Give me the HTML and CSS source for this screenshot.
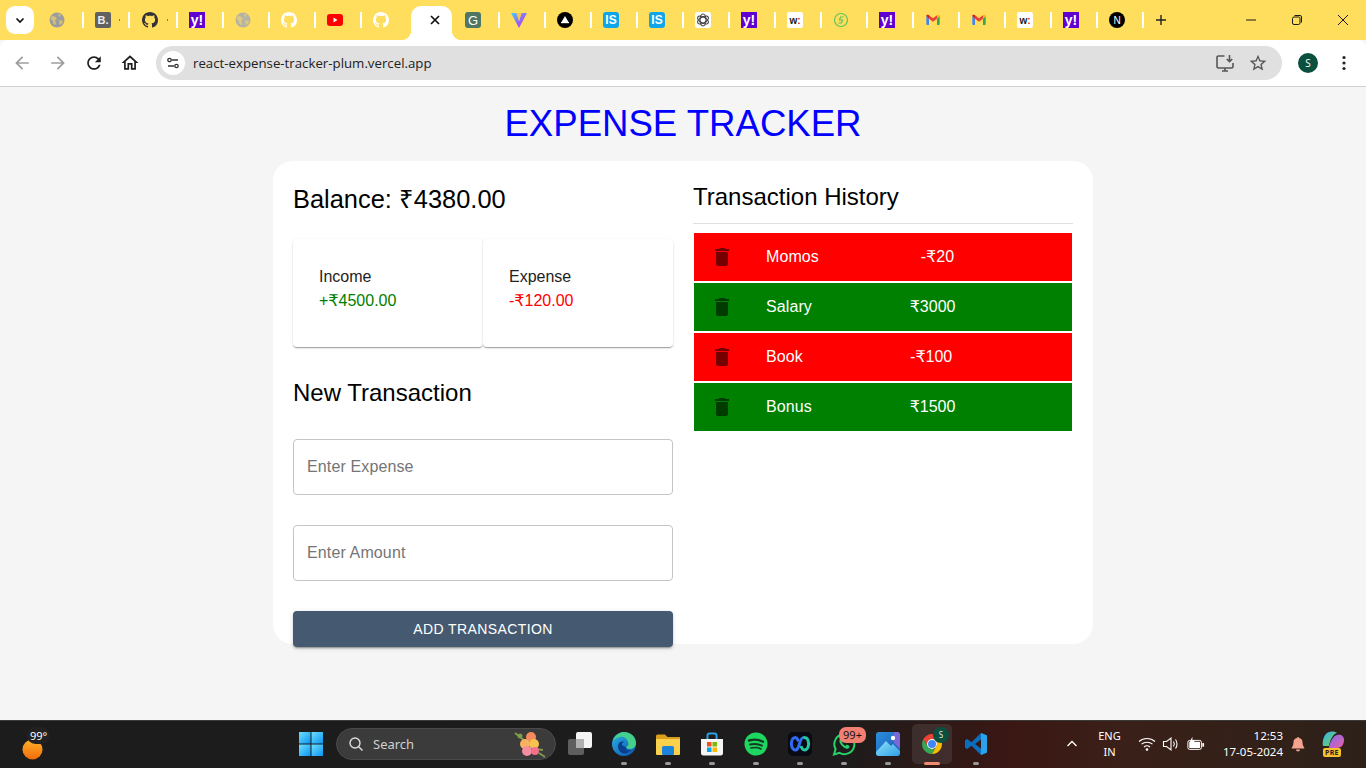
FILE: index.html
```html
<!DOCTYPE html>
<html lang="en">
<head>
<meta charset="utf-8">
<title>Expense Tracker</title>
<link rel="stylesheet" href="styles.css">
</head>
<body>
<svg class="defs" aria-hidden="true">
  <defs>
    <linearGradient id="gVite" x1="0" y1="0" x2="1" y2="1"><stop offset="0" stop-color="#41d1ff"/><stop offset=".6" stop-color="#9a5cf5"/><stop offset="1" stop-color="#bd34fe"/></linearGradient>
    <linearGradient id="gWin" x1="0" y1="0" x2="1" y2="1"><stop offset="0" stop-color="#6fe0fb"/><stop offset="1" stop-color="#0a94f5"/></linearGradient>
    <linearGradient id="gEdge" x1="0" y1="0" x2="1" y2="1"><stop offset="0" stop-color="#2bb5e8"/><stop offset="1" stop-color="#0b4fa8"/></linearGradient>
    <linearGradient id="gSun" x1="0" y1="0" x2="0" y2="1"><stop offset="0" stop-color="#fdb32b"/><stop offset="1" stop-color="#f26a0a"/></linearGradient>
    <linearGradient id="gPhoto" x1="0" y1="0" x2="1" y2="1"><stop offset="0" stop-color="#2a8fe0"/><stop offset="1" stop-color="#1c58b0"/></linearGradient>
    <linearGradient id="gPeak" x1="0" y1="0" x2="1" y2="1"><stop offset="0" stop-color="#8fe3f7"/><stop offset="1" stop-color="#2f9fe8"/></linearGradient>
    <linearGradient id="gCo1" x1="0" y1="0" x2="1" y2="1"><stop offset="0" stop-color="#2fb6ef"/><stop offset="1" stop-color="#7bd04f"/></linearGradient>
    <linearGradient id="gCo2" x1="0" y1="0" x2="1" y2="1"><stop offset="0" stop-color="#7a6cf0"/><stop offset="1" stop-color="#ef5fa7"/></linearGradient>
    <symbol id="github" viewBox="0 0 16 16"><path fill-rule="evenodd" d="M8 0C3.58 0 0 3.58 0 8c0 3.54 2.29 6.53 5.47 7.59.4.07.55-.17.55-.38 0-.19-.01-.82-.01-1.49-2.01.37-2.53-.49-2.69-.94-.09-.23-.48-.94-.82-1.13-.28-.15-.68-.52-.01-.53.63-.01 1.08.58 1.23.82.72 1.21 1.87.87 2.33.66.07-.52.28-.87.51-1.07-1.78-.2-3.64-.89-3.64-3.95 0-.87.31-1.59.82-2.15-.08-.2-.36-1.02.08-2.12 0 0 .67-.21 2.2.82.64-.18 1.32-.27 2-.27.68 0 1.36.09 2 .27 1.53-1.04 2.2-.82 2.2-.82.44 1.1.16 1.92.08 2.12.51.56.82 1.27.82 2.15 0 3.07-1.87 3.75-3.65 3.95.29.25.54.73.54 1.48 0 1.07-.01 1.93-.01 2.2 0 .21.15.46.55.38A8.013 8.013 0 0016 8c0-4.42-3.58-8-8-8z"/></symbol>
    <symbol id="globe" viewBox="0 0 16 16"><circle cx="8" cy="8" r="7.5"/><path class="globe-land" d="M3 3.5 6.5 5 8 7 6 8.5 7 11 6 13.5 4 11 3.5 8.5 1.5 7zM9.5 1.5 12 3 10.5 5 9.5 4zM10 8.5h3.5l.5 1.5-2.5 3L10.500 12z"/></symbol>
    <symbol id="gmail" viewBox="0 0 24 24">
      <path fill="#4285f4" d="M2 6v12a1.500 1.500 0 0 0 1.500 1.500H6V10z"/>
      <path fill="#34a853" d="M18 10v9.500h2.500A1.500 1.500 0 0 0 22 18V6z"/>
      <path fill="#ea4335" d="M6 10V5l6 4.500L18 5v5l-6 4.500z"/>
      <path fill="#fbbc04" d="M18 5l1-.7A2 2 0 0 1 22 6l-4 4z"/>
      <path fill="#c5221f" d="M2 6a2 2 0 0 1 3-1.700L6 5v5z"/>
    </symbol>
    <symbol id="trash" viewBox="0 0 24 24"><path d="M6 19c0 1.100.9 2 2 2h8c1.100 0 2-.9 2-2V7H6v12zM19 4h-3.500l-1-1h-5l-1 1H5v2h14V4z"/></symbol>
  </defs>
</svg>

<div class="tabstrip">
  <button class="tab-search" aria-label="Search tabs"><svg class="ico12" viewBox="0 0 12 12"><path class="stroke-dark" d="M2.500 4.500 6 8l3.500-3.500"/></svg></button>
  <div class="tab"><svg class="fav fav-globe"><use href="#globe"/></svg><i class="sep"></i></div>
  <div class="tab"><span class="fav fav-b">B.</span><i class="dot"></i><i class="sep"></i></div>
  <div class="tab tab-wide"><svg class="fav fav-gh-dark"><use href="#github"/></svg><i class="dot"></i><i class="sep"></i></div>
  <div class="tab"><span class="fav fav-y">y!</span><i class="sep"></i></div>
  <div class="tab"><svg class="fav fav-globe fav-globe-light"><use href="#globe"/></svg><i class="sep"></i></div>
  <div class="tab"><svg class="fav fav-gh-white"><use href="#github"/></svg><i class="sep"></i></div>
  <div class="tab"><svg class="fav" viewBox="0 0 16 16"><rect y="2" width="16" height="12" rx="3" fill="#f00"/><path d="M6.500 5.500 10.500 8l-4 2.500z" fill="#fff"/></svg><i class="sep"></i></div>
  <div class="tab"><svg class="fav fav-gh-white"><use href="#github"/></svg></div>
  <div class="tab tab-active"><svg class="ico12" viewBox="0 0 12 12"><path class="stroke-dark" d="M2 2l8 8M10 2l-8 8"/></svg></div>
  <div class="tab"><span class="fav fav-g">G</span><i class="sep"></i></div>
  <div class="tab"><svg class="fav" viewBox="0 0 16 16"><path d="M0 1h5.500L8 9l2.500-8H16L8 16z" fill="url(#gVite)"/><path d="M5.500 1h5L8 9z" fill="#ffc24a"/></svg><i class="sep"></i></div>
  <div class="tab"><svg class="fav" viewBox="0 0 16 16"><circle cx="8" cy="8" r="8" fill="#000"/><path d="M8 4l3.500 6h-7z" fill="#fff"/><rect x="4" y="10" width="8" height="1.200" fill="#fff"/></svg><i class="sep"></i></div>
  <div class="tab"><span class="fav fav-is">IS</span><i class="sep"></i></div>
  <div class="tab"><span class="fav fav-is">IS</span><i class="sep"></i></div>
  <div class="tab"><svg class="fav" viewBox="0 0 16 16"><rect width="16" height="16" rx="2" fill="#fff"/><g class="gpt"><ellipse cx="8" cy="8" rx="3" ry="6"/><ellipse cx="8" cy="8" rx="3" ry="6" transform="rotate(60 8 8)"/><ellipse cx="8" cy="8" rx="3" ry="6" transform="rotate(120 8 8)"/></g></svg><i class="sep"></i></div>
  <div class="tab"><span class="fav fav-y">y!</span><i class="sep"></i></div>
  <div class="tab"><span class="fav fav-w">w<b>:</b></span><i class="sep"></i></div>
  <div class="tab"><svg class="fav" viewBox="0 0 16 16"><circle class="ring" cx="8" cy="8" r="6.500"/><path class="ring" d="M10.500 5H7.500L6.500 8h3L8.500 11H5.500"/></svg><i class="sep"></i></div>
  <div class="tab"><span class="fav fav-y">y!</span><i class="sep"></i></div>
  <div class="tab"><svg class="fav"><use href="#gmail"/></svg><i class="sep"></i></div>
  <div class="tab"><svg class="fav"><use href="#gmail"/></svg><i class="sep"></i></div>
  <div class="tab"><span class="fav fav-w">w<b>:</b></span><i class="sep"></i></div>
  <div class="tab"><span class="fav fav-y">y!</span><i class="sep"></i></div>
  <div class="tab"><span class="fav fav-n">N</span><i class="sep"></i></div>
  <svg class="new-tab" viewBox="0 0 12 12"><path class="stroke-plus" d="M6 1v10M1 6h10"/></svg>
  <div class="win-controls">
    <svg class="win-btn" viewBox="0 0 12 12"><path class="stroke-thin" d="M1 6h10"/></svg>
    <svg class="win-btn" viewBox="0 0 12 12"><rect class="stroke-thin" x="1.500" y="3" width="7.500" height="7.500" rx="1.500"/><path class="stroke-thin" d="M3.500 1.500h5.500a1.500 1.500 0 0 1 1.500 1.500v5.500"/></svg>
    <svg class="win-btn" viewBox="0 0 12 12"><path class="stroke-thin" d="M1 1l10 10M11 1L1 11"/></svg>
  </div>
</div>

<div class="toolbar">
  <svg class="tool tool-off" viewBox="0 0 24 24"><path d="M20 11H7.830l5.590-5.590L12 4l-8 8 8 8 1.410-1.410L7.830 13H20v-2z"/></svg>
  <svg class="tool tool-off" viewBox="0 0 24 24"><path d="M12 4l-1.410 1.410L16.170 11H4v2h12.170l-5.580 5.590L12 20l8-8z"/></svg>
  <svg class="tool" viewBox="0 0 24 24"><path d="M17.650 6.350C16.200 4.900 14.210 4 12 4c-4.420 0-7.990 3.580-7.990 8s3.570 8 7.990 8c3.730 0 6.840-2.550 7.730-6h-2.080c-.82 2.330-3.040 4-5.650 4-3.310 0-6-2.690-6-6s2.690-6 6-6c1.660 0 3.140.69 4.220 1.780L13 11h7V4l-2.350 2.350z"/></svg>
  <svg class="tool" viewBox="0 0 24 24"><path d="M12 5.690l5 4.500V18h-2v-6H9v6H7v-7.810l5-4.500M12 3L2 12h3v8h6v-6h2v6h6v-8h3L12 3z"/></svg>
  <div class="omnibox">
    <span class="site-chip"><svg class="ico14" viewBox="0 0 14 14"><path class="stroke-tune" d="M6 4h6M2 10h6"/><circle class="stroke-tune" cx="3.500" cy="4" r="1.700"/><circle class="stroke-tune" cx="10.500" cy="10" r="1.700"/></svg></span>
    <span class="url">react-expense-tracker-plum.vercel.app</span>
    <svg class="omni-ico" viewBox="0 0 20 20"><path class="stroke-grey" d="M9.500 3H3.500A1.500 1.500 0 0 0 2 4.500v9A1.500 1.500 0 0 0 3.500 15h13a1.500 1.500 0 0 0 1.500-1.500V10M7 18h6M10 15v3M14.500 2v6.500M11.800 6l2.700 2.700L17.200 6"/></svg>
    <svg class="omni-ico omni-star" viewBox="0 0 24 24"><path d="M22 9.240l-7.190-.62L12 2 9.190 8.630 2 9.240l5.460 4.730L5.820 21 12 17.270 18.180 21l-1.630-7.030L22 9.240zM12 15.400l-3.760 2.270 1-4.280-3.320-2.880 4.380-.38L12 6.100l1.710 4.040 4.380.38-3.320 2.880 1 4.280L12 15.400z"/></svg>
  </div>
  <span class="avatar">S</span>
  <svg class="more" viewBox="0 0 4 16"><circle cx="2" cy="2.500" r="1.600"/><circle cx="2" cy="8" r="1.600"/><circle cx="2" cy="13.500" r="1.600"/></svg>
</div>

<main class="page">
  <h1 class="title">EXPENSE TRACKER</h1>
  <section class="panel">
    <div class="col">
      <h2 class="balance">Balance: ₹4380.00</h2>
      <div class="summary">
        <div class="stat"><div>Income</div><div class="income">+<span class="rs">₹</span>4500.00</div></div>
        <div class="stat"><div>Expense</div><div class="expense">-<span class="rs">₹</span>120.00</div></div>
      </div>
      <h2 class="new-title">New Transaction</h2>
      <form class="form">
        <input class="field" type="text" placeholder="Enter Expense">
        <input class="field" type="text" placeholder="Enter Amount">
        <button class="submit" type="button">ADD TRANSACTION</button>
      </form>
    </div>
    <div class="col">
      <h2 class="history-title">Transaction History</h2>
      <div class="rule"></div>
      <ul class="list">
        <li class="row row-neg"><svg class="del"><use href="#trash"/></svg><span class="name">Momos</span><span class="amt">-<span class="rs">₹</span>20</span></li>
        <li class="row row-pos"><svg class="del"><use href="#trash"/></svg><span class="name">Salary</span><span class="amt"><span class="rs">₹</span>3000</span></li>
        <li class="row row-neg"><svg class="del"><use href="#trash"/></svg><span class="name">Book</span><span class="amt">-<span class="rs">₹</span>100</span></li>
        <li class="row row-pos"><svg class="del"><use href="#trash"/></svg><span class="name">Bonus</span><span class="amt"><span class="rs">₹</span>1500</span></li>
      </ul>
    </div>
  </section>
</main>

<footer class="taskbar">
  <div class="weather">
    <svg class="sun" viewBox="0 0 22 22"><circle cx="11" cy="11" r="10.500" fill="url(#gSun)"/></svg>
    <span class="temp">99°</span>
  </div>
  <div class="task"><svg class="ti" viewBox="0 0 24 24"><rect x="0" y="0" width="11.500" height="11.500" fill="url(#gWin)"/><rect x="12.500" y="0" width="11.500" height="11.500" fill="url(#gWin)"/><rect x="0" y="12.500" width="11.500" height="11.500" fill="url(#gWin)"/><rect x="12.500" y="12.500" width="11.500" height="11.500" fill="url(#gWin)"/></svg></div>
  <div class="search">
    <svg class="search-ico" viewBox="0 0 16 16"><circle class="stroke-light" cx="7" cy="7" r="5"/><path class="stroke-light" d="M10.700 10.700 14.500 14.500"/></svg>
    <span class="search-text">Search</span>
    <svg class="flowers" viewBox="0 0 36 30"><path d="M4 4 14 12M28 24l6 4M24 20l8 1" stroke="#7f9a4a" stroke-width="2"/><circle cx="20" cy="8" r="5" fill="#f58a5c"/><circle cx="14" cy="15" r="5" fill="#f9b25f"/><circle cx="23" cy="15" r="5" fill="#f7c24f"/><circle cx="16" cy="22" r="5" fill="#f58fa0"/><circle cx="24" cy="22" r="4" fill="#f46f8a"/><circle cx="9" cy="7" r="2.500" fill="#7f9a4a"/></svg>
  </div>
  <div class="task"><svg class="ti" viewBox="0 0 24 24"><rect x="0" y="7" width="16" height="16" rx="2" fill="#5e5e5e"/><rect x="8" y="0" width="16" height="16" rx="2" fill="#f4f4f4"/><rect x="8" y="7" width="8" height="9" fill="#b0b0b0"/></svg></div>
  <div class="task task-run"><svg class="ti" viewBox="0 0 24 24"><circle cx="12" cy="12" r="12" fill="url(#gEdge)"/><path d="M1 9C3 2 9 0 12 0c7 0 12 5 12 11 0 4-3 6-6 6-2 0-4-1-4-2 2-1 3-2 2-5C15 6 11 4 8 5 5 6 2 7 1 9z" fill="#43cf8e"/><path d="M14 15c-1 2 2 4 5 3-2 3-6 4-9 3-4-2-5-7-3-10 1-1 3-2 5-1-3 1-3 4 2 5z" fill="#0a3f8f"/></svg></div>
  <div class="task task-run"><svg class="ti" viewBox="0 0 24 24"><path d="M0 4a1.500 1.500 0 0 1 1.500-1.500H9L11.500 5H24v4H0z" fill="#d99e1c"/><path d="M0 7h24v15a1 1 0 0 1-1 1H1a1 1 0 0 1-1-1z" fill="#fbd04b"/><rect x="6" y="14" width="12" height="9" rx="1.500" fill="#1c84d8"/></svg></div>
  <div class="task task-run"><svg class="ti" viewBox="0 0 24 24"><path class="stroke-store" d="M7.500 7V3.500A2 2 0 0 1 9.500 1.500h5a2 2 0 0 1 2 2V7"/><path d="M1 7h22v14a2.500 2.500 0 0 1-2.500 2.500h-17A2.500 2.500 0 0 1 1 21z" fill="#f5f5f5"/><rect x="7" y="10" width="4.500" height="4.500" fill="#f25022"/><rect x="12.500" y="10" width="4.500" height="4.500" fill="#7fba00"/><rect x="7" y="15.500" width="4.500" height="4.500" fill="#00a4ef"/><rect x="12.500" y="15.500" width="4.500" height="4.500" fill="#ffb900"/></svg></div>
  <div class="task task-run"><svg class="ti" viewBox="0 0 24 24"><circle cx="12" cy="12" r="11.500" fill="#1ed760"/><path class="stroke-spot spot1" d="M5 8.500c4.500-1.300 10-1 14 1.200"/><path class="stroke-spot spot2" d="M6 12.500c4-1 8.500-.7 12 1.100"/><path class="stroke-spot spot3" d="M7 16c3.300-.8 7-.6 10 .9"/></svg></div>
  <div class="task task-run"><svg class="ti" viewBox="0 0 24 24"><rect width="24" height="24" rx="5" fill="#0a0a14"/><path class="stroke-webex-b" d="M4 8c-1.500 5 0 10 3.500 10 4.500 0 3.500-12 7.500-12"/><path class="stroke-webex-g" d="M20 8c1.500 5 0 10-3.500 10-2 0-3-2-3.500-4M20 8c-1-2-3-3-5-2"/><path class="stroke-webex-b" d="M4 8c1-2 3-3 4.500-2 1 .7 1.500 2 2 3.500"/></svg></div>
  <div class="task task-run"><svg class="ti" viewBox="0 0 24 24"><path class="stroke-wa" d="M2 22.500l1.600-5.500A10 10 0 1 1 7.500 20.900z"/><path d="M8.500 7c-1 .5-1.500 2-.8 3.500 1.300 2.800 3.300 4.800 6 6 1.500.6 3 0 3.500-1l.3-1.500-2.800-1.400-1.200 1.300c-1.600-.7-2.900-2-3.600-3.600L11.400 9 10 7z" fill="#25d366"/></svg><span class="wa-badge">99+</span></div>
  <div class="task task-run"><svg class="ti" viewBox="0 0 24 24"><rect width="24" height="24" rx="3" fill="url(#gPhoto)"/><path d="M0 20 10 9l5 5 2-2 7 7v2a3 3 0 0 1-3 3H3a3 3 0 0 1-3-3z" fill="url(#gPeak)"/><path d="M18 0h3a3 3 0 0 1 3 3v14l-6-6z" fill="#7a67d8"/><circle cx="17" cy="6" r="2.200" fill="#fff"/></svg></div>
  <div class="task task-active"><svg class="ti" viewBox="0 0 48 48"><path fill="#ea4335" d="M24 4C16.600 4 10.200 8 6.700 14l8.600 15A10 10 0 0 1 24 14h17.300C37.800 8 31.400 4 24 4z"/><path fill="#34a853" d="M6.700 14A20 20 0 0 0 24 44l8.700-15a10 10 0 0 1-17.400 0z"/><path fill="#fbbc04" d="M41.300 14H24a10 10 0 0 1 8.700 15L24 44A20 20 0 0 0 41.300 14z"/><circle cx="24" cy="24" r="10" fill="#fff"/><circle cx="24" cy="24" r="8" fill="#4285f4"/></svg><span class="chrome-badge">S</span></div>
  <div class="task task-run"><svg class="ti" viewBox="0 0 24 24"><path fill="#0a6ebd" d="M17 1 7.500 10.200 3.200 7 1 8.200v7.600L3.200 17l4.300-3.200L17 23l6-2.500V3.500zM17 7.500v9L11 12z" fill-rule="evenodd"/><path fill="#2aa2ec" d="M17 1l6 2.500v17L17 23z"/></svg></div>
  <div class="tray">
    <svg class="tray-chev" viewBox="0 0 12 12"><path class="stroke-white" d="M1.500 8 6 3.500 10.500 8"/></svg>
    <div class="lang"><span>ENG</span><span>IN</span></div>
    <svg class="tray-ico" viewBox="0 0 18 18"><path class="stroke-white-thin" d="M1 6.500c4.500-4 11.500-4 16 0M3.500 9.200c3-2.600 8-2.600 11 0M6 12c1.700-1.400 4.300-1.400 6 0"/><circle cx="9" cy="14.500" r="1.300" fill="#fff"/></svg>
    <svg class="tray-ico" viewBox="0 0 18 18"><path class="stroke-white-thin" d="M1.500 6.500h3L9 3v12L4.500 11.500h-3zM11.500 6.500c1 1.500 1 3.500 0 5M13.500 4.500c2 2.500 2 6.500 0 9"/></svg>
    <svg class="tray-bat" viewBox="0 0 20 16"><rect class="stroke-white-thin" x="1" y="4" width="15" height="10" rx="2"/><rect x="17" y="7" width="2" height="4" fill="#fff"/><rect x="2.500" y="5.500" width="12" height="7" fill="#fff"/><path d="M6 0 3 6h3l-1 4 4-6H6z" fill="#fff"/></svg>
    <div class="clock"><span>12:53</span><span>17-05-2024</span></div>
    <svg class="bell" viewBox="0 0 16 16"><path d="M8 1a1 1 0 0 1 1 1 4.500 4.500 0 0 1 3.500 4.500c0 3.500 2 5 2 6H1.500c0-1 2-2.500 2-6A4.500 4.500 0 0 1 7 2a1 1 0 0 1 1-1zM6 13.500h4a2 2 0 0 1-4 0z"/></svg>
    <div class="copilot">
      <svg class="co-ico" viewBox="0 0 24 20"><path d="M2 15C1 10 3 4 6 2c3-2 8-2 10 0-4 1-7 7-8 13z" fill="url(#gCo1)"/><path d="M8 16c1-5 4-11 8-12 4-1 7 1 7 5 0 5-3 8-7 8H8z" fill="url(#gCo2)"/></svg>
      <span class="pre">PRE</span>
    </div>
  </div>
</footer>
</body>
</html>
```
FILE: styles.css
```css
* { box-sizing: border-box; }
html, body { margin: 0; height: 100%; }
body {
  width: 1366px;
  height: 768px;
  overflow: hidden;
  display: flex;
  flex-direction: column;
  font-family: "Liberation Sans", Arial, sans-serif;
  background: #f5f5f5;
}
.defs { position: absolute; width: 0; height: 0; }
.rs { font-family: "DejaVu Sans", sans-serif; line-height: 1; }

/* Tab strip */
.tabstrip {
  height: 40px;
  flex: none;
  display: flex;
  align-items: center;
  background: #ffdd5d;
  padding-left: 6px;
}
.tab-search {
  width: 28px;
  height: 28px;
  margin-right: 4px;
  padding: 0;
  border: 0;
  border-radius: 9px;
  background: #fff;
  display: flex;
  align-items: center;
  justify-content: center;
}
.ico12 { width: 12px; height: 12px; }
.stroke-dark { fill: none; stroke: #111; stroke-width: 1.7; }
.stroke-plus { fill: none; stroke: #222; stroke-width: 1.400; }
.tab {
  width: 46px;
  height: 40px;
  flex: none;
  display: flex;
  align-items: center;
  justify-content: space-between;
  padding-left: 11px;
}
.tab-wide { width: 48px; padding-left: 12px; }
.sep { width: 2px; height: 16px; background: #fff; }
.dot { width: 1px; height: 2px; background: #8a7a30; }
.fav {
  width: 16px;
  height: 16px;
  flex: none;
  display: flex;
  align-items: center;
  justify-content: center;
  font-weight: 700;
  border-radius: 2px;
}
.fav-globe { fill: #9a9c9e; }
.fav-globe-light { fill: #b5b3a5; }
.globe-land { fill: #ffdd5d; opacity: .55; }
.fav-gh-dark { fill: #333; }
.fav-gh-white { fill: #fff; }
.fav-b { background: #616161; color: #eee; font-size: 11px; }
.fav-y { background: #6001d2; color: #fff; font-size: 14px; border-radius: 0; letter-spacing: 0; }
.fav-g { background: #4f7564; color: #fff; font-size: 13px; border-radius: 3px; font-weight: 400; }
.fav-is { background: #0ea5e9; color: #fff; font-size: 12px; border-radius: 3px; }
.fav-w { background: #fff; color: #222; font-size: 10px; }
.fav-w b { color: #e01b2e; }
.fav-n { background: #000; color: #fff; font-size: 10px; border-radius: 50%; font-weight: 400; }
.gpt { fill: none; stroke: #444; stroke-width: 1.200; }
.ring { fill: none; stroke: #62c45c; stroke-width: 1.200; }
.tab-active {
  position: relative;
  width: 41px;
  height: 34px;
  margin: 6px 2px 0 3px;
  padding: 0 0 6px 18px;
  background: #fff;
  border-radius: 10px 10px 0 0;
  justify-content: flex-start;
}
.tab-active::before,
.tab-active::after {
  content: "";
  position: absolute;
  bottom: 0;
  width: 10px;
  height: 10px;
}
.tab-active::before { left: -10px; background: radial-gradient(circle at 0 0, transparent 10px, #fff 10.500px); }
.tab-active::after { right: -10px; background: radial-gradient(circle at 100% 0, transparent 10px, #fff 10.500px); }
.new-tab { width: 12px; height: 12px; margin-left: 11px; flex: none; }
.win-controls { margin-left: auto; display: flex; }
.win-btn { width: 46px; height: 12px; flex: none; }
.stroke-thin { fill: none; stroke: #1a1a1a; stroke-width: 1; }

/* Toolbar */
.toolbar {
  height: 47px;
  flex: none;
  display: flex;
  align-items: center;
  padding: 0 0 1px 10px;
  background: #fff;
  border-bottom: 1px solid #d0d0d0;
  border-radius: 8px 8px 0 0;
}
.tool { width: 24px; height: 24px; margin-right: 12px; flex: none; fill: #1f1f1f; transform: scale(.85); }
.tool-off { fill: #9e9e9e; }
.omnibox {
  width: 1126px;
  height: 34px;
  margin-left: 2px;
  border-radius: 17px;
  background: #e0e0e0;
  display: flex;
  align-items: center;
  padding: 0 14px 0 5px;
  flex: none;
}
.site-chip {
  width: 24px;
  height: 24px;
  border-radius: 50%;
  background: #fff;
  display: flex;
  align-items: center;
  justify-content: center;
  flex: none;
}
.ico14 { width: 14px; height: 14px; }
.stroke-tune { fill: none; stroke: #333; stroke-width: 1.300; }
.url { margin-left: 8px; font: 13.250px "Open Sans", sans-serif; color: #222; flex: 1; }
.omni-ico { width: 20px; height: 20px; flex: none; }
.stroke-grey { fill: none; stroke: #555; stroke-width: 1.600; }
.omni-star { margin-left: 13px; fill: #555; }
.avatar {
  width: 20px;
  height: 20px;
  margin-left: 16px;
  border-radius: 50%;
  background: #0b4f3f;
  color: #fff;
  font: 10px/20px "Open Sans", sans-serif;
  text-align: center;
  flex: none;
}
.more { width: 4px; height: 16px; margin-left: 24px; fill: #222; flex: none; }

/* Page */
.page {
  flex: 1;
  min-height: 0;
  display: flex;
  flex-direction: column;
  align-items: center;
}
.title {
  margin: 16px 0 16px;
  font-size: 36.600px;
  line-height: 42px;
  font-weight: 400;
  color: #0000ff;
}
.panel {
  width: 820px;
  height: 483px;
  padding: 20px;
  border-radius: 20px;
  background: #fff;
  display: grid;
  grid-template-columns: 380px 380px;
  column-gap: 20px;
  align-items: start;
}
.col { min-width: 0; }
.balance {
  margin: 0 0 22px;
  font-size: 25.400px;
  line-height: 36px;
  font-weight: 400;
  color: #000;
}
.summary { display: flex; }
.stat {
  width: 190px;
  height: 108px;
  padding: 26px 26px 0;
  border-radius: 4px;
  background: #fff;
  color: #222;
  font-size: 16px;
  line-height: 24px;
  box-shadow: 0 2px 1px -1px rgba(0,0,0,.2), 0 1px 1px 0 rgba(0,0,0,.14), 0 1px 3px 0 rgba(0,0,0,.12);
}
.income { color: #008000; }
.expense { color: #ff0000; }
.new-title {
  margin: 28px 0 28px;
  font-size: 24px;
  line-height: 36px;
  font-weight: 400;
  color: #000;
}
.form { display: flex; flex-direction: column; gap: 30px; }
.field {
  height: 56px;
  width: 100%;
  padding: 0 13px;
  border: 1px solid #c4c4c4;
  border-radius: 4px;
  font: 16px "Liberation Sans", Arial, sans-serif;
  letter-spacing: .13px;
  color: #222;
  background: #fff;
}
.field::placeholder { color: #757575; opacity: 1; }
.submit {
  height: 36px;
  border: 0;
  border-radius: 4px;
  background: #455a70;
  color: #fff;
  font: 14px "Liberation Sans", Arial, sans-serif;
  letter-spacing: .4px;
  box-shadow: 0 3px 1px -2px rgba(0,0,0,.2), 0 2px 2px 0 rgba(0,0,0,.14), 0 1px 5px 0 rgba(0,0,0,.12);
}
.history-title {
  margin: 0 0 11px;
  padding-top: 1px;
  font-size: 24px;
  line-height: 30px;
  font-weight: 400;
  color: #000;
}
.rule { height: 1px; background: #e0e0e0; margin-bottom: 9px; }
.list {
  list-style: none;
  margin: 0 1px;
  padding: 0;
  display: flex;
  flex-direction: column;
  gap: 2px;
}
.row {
  height: 48px;
  display: flex;
  align-items: center;
  padding: 0 84px 0 16px;
  color: #fff;
  font-size: 16px;
  line-height: 24px;
}
.row-neg { background: #ff0000; }
.row-pos { background: #008000; }
.del { width: 24px; height: 24px; margin-right: 32px; flex: none; fill: rgba(0,0,0,.54); }
.name, .amt { flex: 1 1 auto; }
.name { letter-spacing: .1px; }
.amt { text-align: center; }

/* Taskbar */
.taskbar {
  height: 48px;
  flex: none;
  display: flex;
  align-items: center;
  padding-bottom: 1px;
  color: #fff;
  font-family: "Noto Sans", sans-serif;
  border-top: 1px solid #3a3a3a;
  background: linear-gradient(90deg, #1c1c1c 0%, #1e1c1c 62%, #3a1713 74%, #3a2018 82%, #2c2119 100%);
}
.weather { width: 289px; height: 46px; flex: none; position: relative; }
.sun { position: absolute; left: 22px; top: 18px; width: 21px; height: 21px; }
.temp {
  position: absolute;
  left: 27px;
  top: 6px;
  padding: 1px 3px;
  border-radius: 9px;
  background: #222;
  font-size: 11px;
  line-height: 15px;
}
.task {
  width: 44px;
  height: 40px;
  flex: none;
  position: relative;
  display: flex;
  align-items: center;
  justify-content: center;
  border-radius: 5px;
}
.ti { width: 24px; height: 24px; flex: none; }
.task-run::after,
.task-active::after {
  content: "";
  position: absolute;
  bottom: -1px;
  left: 19px;
  width: 6px;
  height: 3px;
  border-radius: 2px;
  background: #9a9a9a;
}
.task-active { width: 40px; margin: 0 2px; background: rgba(255,255,255,.09); }
.task-active::after { left: 12px; width: 16px; background: #f08a70; }
.search {
  width: 220px;
  height: 32px;
  margin: 0 2px 0 3px;
  flex: none;
  display: flex;
  align-items: center;
  padding: 0 8px 0 11px;
  border-radius: 16px;
  background: #3b3b3b;
  border: 1px solid #4a4a4a;
}
.search-ico { width: 16px; height: 16px; flex: none; }
.stroke-light { fill: none; stroke: #ddd; stroke-width: 1.400; }
.search-text { margin-left: 9px; font-size: 13px; color: #d0d0d0; flex: 1; }
.flowers { width: 36px; height: 30px; flex: none; }
.stroke-store { fill: none; stroke: #2b9fe6; stroke-width: 2; }
.stroke-spot { fill: none; stroke: #143a20; stroke-linecap: round; }
.spot1 { stroke-width: 2.400; }
.spot2 { stroke-width: 2; }
.spot3 { stroke-width: 1.700; }
.stroke-webex-b { fill: none; stroke: #2f6cf0; stroke-width: 3; }
.stroke-webex-g { fill: none; stroke: #23c7a0; stroke-width: 3; }
.stroke-wa { fill: none; stroke: #25d366; stroke-width: 2; }
.wa-badge {
  position: absolute;
  left: 17px;
  top: 3px;
  width: 27px;
  height: 16px;
  border-radius: 7px;
  background: #f28072;
  color: #111;
  font-size: 11px;
  line-height: 16px;
  text-align: center;
}
.chrome-badge {
  position: absolute;
  left: 21px;
  top: 3px;
  width: 16px;
  height: 16px;
  border-radius: 50%;
  background: #0b4f3f;
  color: #e8e8e8;
  font-size: 8px;
  line-height: 16px;
  text-align: center;
}
.tray { margin-left: auto; display: flex; align-items: center; padding-right: 13px; }
.tray-chev { width: 24px; height: 12px; flex: none; }
.stroke-white { fill: none; stroke: #fff; stroke-width: 1.300; }
.stroke-white-thin { fill: none; stroke: #fff; stroke-width: 1.100; }
.lang {
  width: 51px;
  display: flex;
  flex-direction: column;
  align-items: center;
  font-size: 11px;
  line-height: 16px;
}
.tray-ico { width: 18px; height: 18px; margin: 0 3px; flex: none; }
.tray-bat { width: 18px; height: 16px; margin: 0 4px; flex: none; }
.clock {
  width: 74px;
  display: flex;
  flex-direction: column;
  align-items: flex-end;
  font-size: 11.500px;
  line-height: 16px;
}
.bell { width: 30px; height: 16px; flex: none; fill: #f5a38e; }
.copilot { width: 40px; display: flex; flex-direction: column; align-items: center; position: relative; height: 28px; }
.co-ico { width: 24px; height: 20px; flex: none; margin-top: 1px; }
.pre {
  position: absolute;
  left: 10px;
  top: 18px;
  padding: 0 2px;
  border-radius: 2px;
  background: #fbc02d;
  color: #222;
  font-size: 7px;
  font-weight: 700;
  line-height: 9px;
  letter-spacing: .3px;
}
```
